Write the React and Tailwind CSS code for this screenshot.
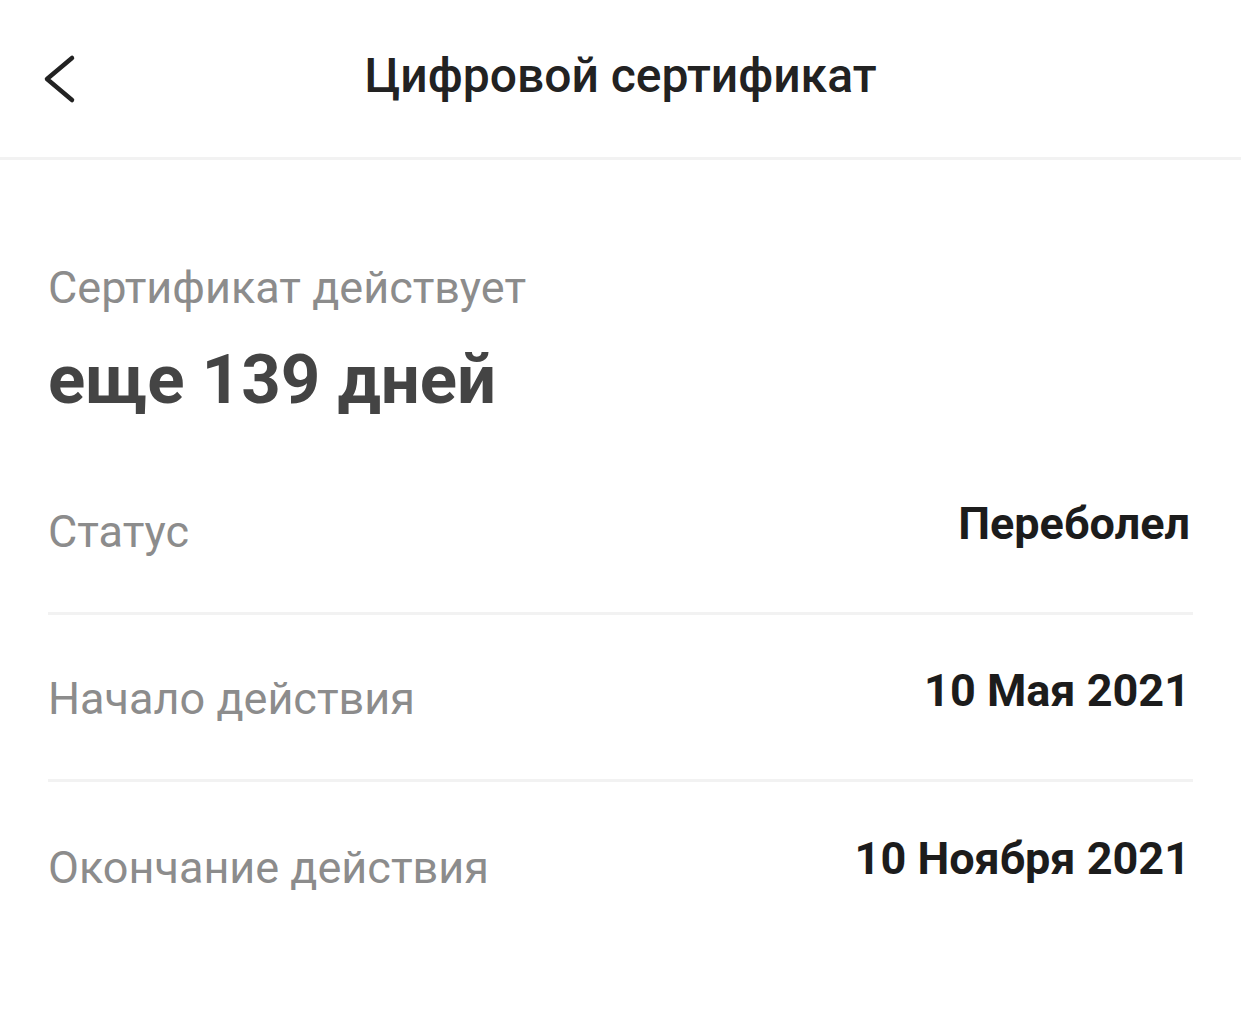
const rows = [
  { label: "Статус", value: "Переболел" },
  { label: "Начало действия", value: "10 Мая 2021" },
  { label: "Окончание действия", value: "10 Ноября 2021" },
];

export default function App() {
  return (
    <div className="min-h-screen bg-white font-['Roboto',sans-serif]">
      <header className="relative flex h-[160px] items-center justify-center border-b-[3px] border-[#f2f2f2]">
        <button className="absolute left-[42px] top-[54px] text-[#222]">
          <svg width="34" height="50" viewBox="0 0 34 50" fill="none">
            <polyline points="30,4 5,25 30,46" stroke="currentColor" strokeWidth="4.5" strokeLinecap="round" strokeLinejoin="round" />
          </svg>
        </button>
        <h1 className="mt-[-6px] text-[48px] font-medium text-[#222]">Цифровой сертификат</h1>
      </header>

      <main className="pl-[48px] pr-[48px]">
        <div className="pt-[100px]">
          <p className="text-[45px] leading-[56px] text-[#8c8c8c]">Сертификат действует</p>
          <p className="mt-[22px] text-[69px] font-bold leading-[84px] text-[#444]">еще 139 дней</p>
        </div>

        <div className="mt-[26px]">
          {rows.map((row, i) => (
            <div
              key={row.label}
              className={`flex h-[167px] items-center justify-between ${i < rows.length - 1 ? "border-b-[3px] border-[#f2f2f2]" : ""}`}
            >
              <span className="mt-[4px] text-[45px] text-[#8c8c8c]">{row.label}</span>
              <span className="mt-[-13px] pr-[3px] text-[45px] font-bold text-[#1c1c1c]">{row.value}</span>
            </div>
          ))}
        </div>
      </main>
    </div>
  );
}
